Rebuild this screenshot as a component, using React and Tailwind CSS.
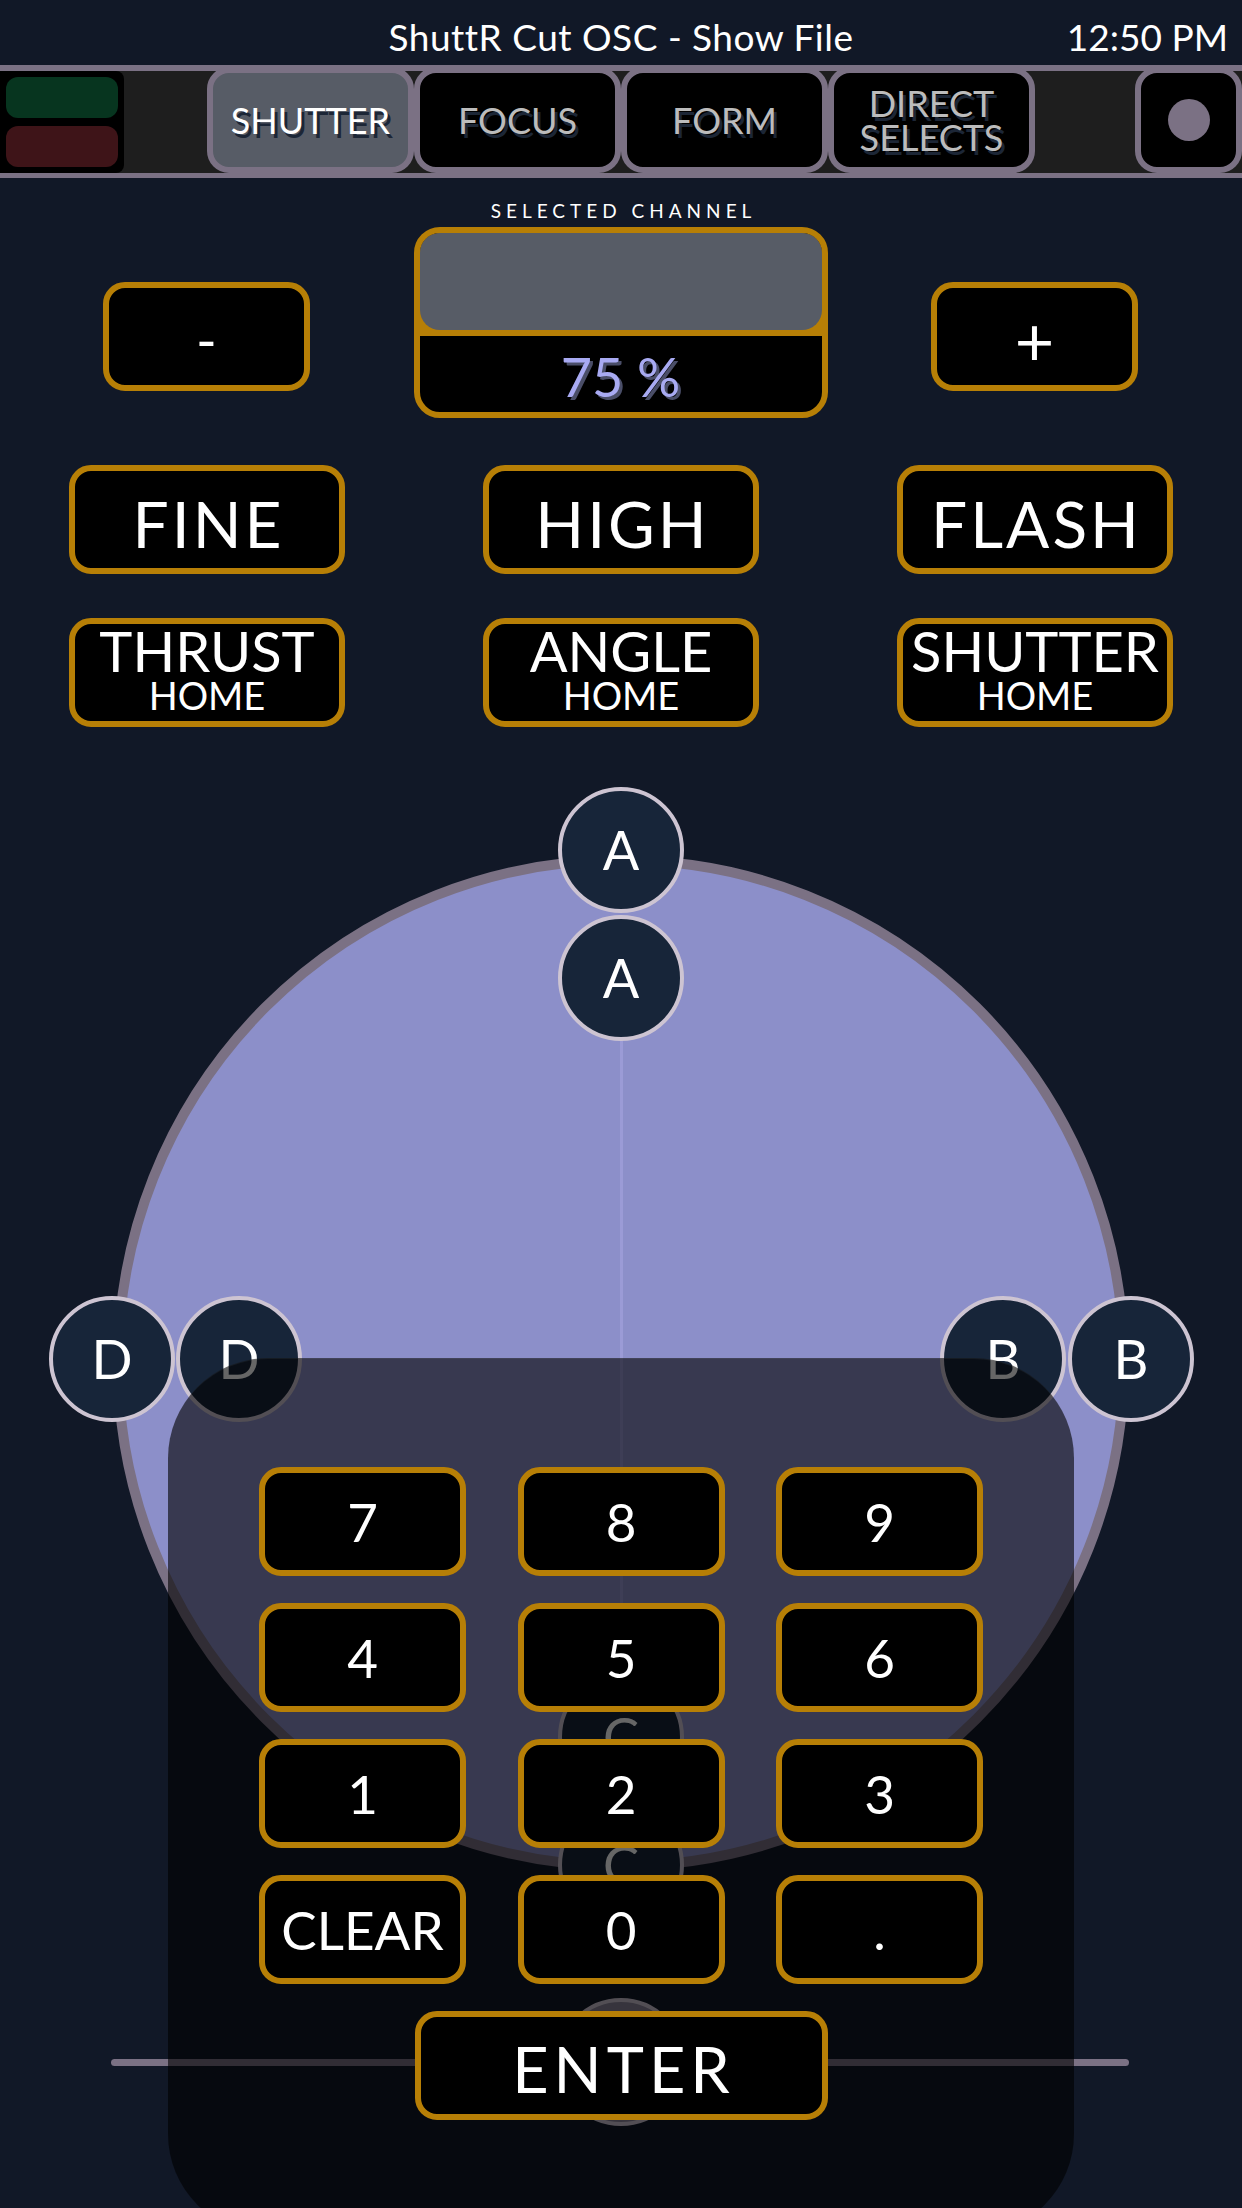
import React from 'react';

const nodes = [
  { x: 621, y: 123, label: 'A' },
  { x: 621, y: 251, label: 'A' },
  { x: 112, y: 632, label: 'D' },
  { x: 239, y: 632, label: 'D' },
  { x: 1003, y: 632, label: 'B' },
  { x: 1131, y: 632, label: 'B' },
  { x: 621, y: 1010, label: 'C' },
  { x: 621, y: 1138, label: 'C' },
];

const keys = ['7', '8', '9', '4', '5', '6', '1', '2', '3', 'CLEAR', '0', '.'];

function Tab({ active, children }) {
  return (
    <div
      className={`-mt-[4px] h-[106px] w-[207px] shrink-0 rounded-[22px] border-[6px] border-[#7b7184] flex items-center justify-center text-center text-[36px] leading-[34px] [text-shadow:3px_4px_0_#1c2636] ${
        active ? 'bg-[#575c66] text-white' : 'bg-black text-[#bcbcbc]'
      }`}
    >
      {children}
    </div>
  );
}

function Node({ x, y, label }) {
  return (
    <div
      className="absolute -ml-[63px] -mt-[63px] w-[126px] h-[126px] rounded-full bg-[#172539] border-[4px] border-[#cdc4d2] flex items-center justify-center text-white text-[54px] leading-[54px]"
      style={{ left: x, top: y }}
    >
      {label}
    </div>
  );
}

export default function App() {
  return (
    <div className="relative w-[1242px] h-[2208px] overflow-hidden bg-[#111827] font-[Lato,sans-serif] select-none">
      {/* title bar */}
      <div className="grid grid-cols-[1fr_auto_1fr] h-[65px] pt-[15px] text-white text-[37px] leading-[44px]">
        <div />
        <div className="tracking-[0.5px]">ShuttR Cut OSC - Show File</div>
        <div className="justify-self-end pr-[14px]">12:50 PM</div>
      </div>

      {/* tab bar */}
      <div className="flex h-[113px] border-t-[6px] border-b-[5px] border-[#7b7184] bg-[#1e1e1e]">
        <div className="w-[124px] h-full shrink-0 bg-black rounded-r-[8px] flex flex-col gap-[8px] p-[6px]">
          <div className="h-[41px] rounded-[12px] bg-[#07351f]" />
          <div className="h-[41px] rounded-[12px] bg-[#3e1418]" />
        </div>
        <div className="w-[83px] shrink-0" />
        <Tab active>SHUTTER</Tab>
        <Tab>FOCUS</Tab>
        <Tab>FORM</Tab>
        <Tab>
          DIRECT
          <br />
          SELECTS
        </Tab>
        <div className="w-[100px] shrink-0" />
        <div className="-mt-[4px] h-[106px] w-[107px] shrink-0 rounded-[22px] border-[6px] border-[#7b7184] bg-black flex items-center justify-center">
          <div className="w-[42px] h-[42px] rounded-full bg-[#7b7184]" />
        </div>
      </div>

      {/* selected channel */}
      <div className="mt-[22px] h-[22px] pl-[5px] text-center text-white text-[19px] leading-[22px] tracking-[5px]">
        SELECTED CHANNEL
      </div>
      <div className="mt-[5px] flex items-start justify-between pl-[103px] pr-[104px]">
        <div className="mt-[55px] w-[207px] h-[109px] rounded-[22px] border-[6px] border-[#b77f06] bg-black flex items-center justify-center pt-[6px] text-white text-[56px] leading-[56px]">
          -
        </div>
        <div className="w-[414px] h-[191px] rounded-[26px] border-[6px] border-[#b77f06] bg-black overflow-hidden flex flex-col">
          <div className="h-[103px] shrink-0 bg-[#b77f06] pb-[6px]">
            <div className="h-full rounded-b-[20px] bg-[#575c66]" />
          </div>
          <div className="flex-1 flex items-center justify-center pt-[6px] text-[54px] leading-[54px] text-[#a8aaf2] [text-shadow:3px_3px_0_#4a4e68]">
            75 %
          </div>
        </div>
        <div className="mt-[55px] w-[207px] h-[109px] rounded-[22px] border-[6px] border-[#b77f06] bg-black flex items-center justify-center pt-[6px] text-white text-[68px] leading-[68px]">
          +
        </div>
      </div>

      {/* mode buttons */}
      <div className="mt-[47px] flex justify-between px-[69px]">
        {['FINE', 'HIGH', 'FLASH'].map((t) => (
          <div
            key={t}
            className="w-[276px] h-[109px] rounded-[22px] border-[6px] border-[#b77f06] bg-black flex items-center justify-center pt-[8px] pl-[3px] text-white text-[64px] leading-[64px] tracking-[3px]"
          >
            {t}
          </div>
        ))}
      </div>
      <div className="mt-[44px] flex justify-between px-[69px]">
        {['THRUST', 'ANGLE', 'SHUTTER'].map((t) => (
          <div
            key={t}
            className="w-[276px] h-[109px] rounded-[22px] border-[6px] border-[#b77f06] bg-black flex flex-col items-center text-white"
          >
            <div className="mt-[2px] text-[56px] leading-[50px]">{t}</div>
            <div className="text-[38px] leading-[38px]">HOME</div>
          </div>
        ))}
      </div>

      {/* shutter diagram */}
      <div className="relative h-[1481px]">
        <div className="absolute left-[113px] top-[128px] w-[1016px] h-[1016px] rounded-full border-[10px] border-[#7b7184] bg-[#8c8fc9]" />
        <div className="absolute left-[620px] top-[251px] w-[3px] h-[887px] bg-[#9b9bd6]" />
        <div className="absolute left-[111px] top-[1332px] w-[1018px] h-[7px] rounded-full bg-[#7b7184]" />
        <div className="absolute left-[557px] top-[1271px] w-[128px] h-[128px] rounded-full bg-[#8a8398] border-[4px] border-[#cdc4d2]" />
        {nodes.map((n, i) => (
          <Node key={i} {...n} />
        ))}

        {/* keypad overlay */}
        <div className="absolute left-[168px] top-[631px] w-[906px] h-[876px] rounded-[100px] bg-black/60 border-t border-white/5 flex flex-col items-center pt-[108px]">
          <div className="grid grid-cols-[207px_207px_207px] gap-x-[51.5px] gap-y-[27px]">
            {keys.map((k) => (
              <div
                key={k}
                className="w-[207px] h-[109px] rounded-[22px] border-[6px] border-[#b77f06] bg-black flex items-center justify-center text-white text-[53px] leading-[54px]"
              >
                {k}
              </div>
            ))}
          </div>
          <div className="mt-[27px] w-[413px] h-[109px] rounded-[22px] border-[6px] border-[#b77f06] bg-black flex items-center justify-center pt-[6px] pl-[5px] text-white text-[63px] leading-[63px] tracking-[5px]">
            ENTER
          </div>
        </div>
      </div>
    </div>
  );
}
